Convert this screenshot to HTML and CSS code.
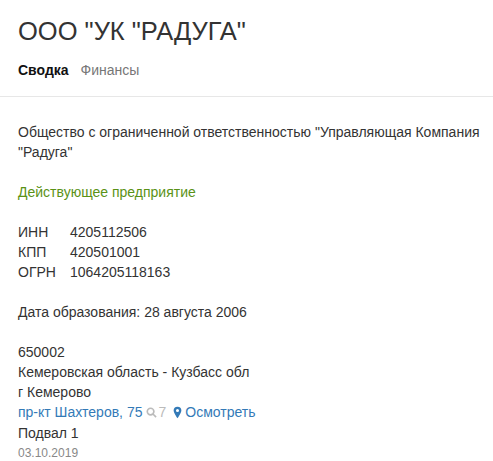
FILE: index.html
```html
<!DOCTYPE html>
<html lang="ru">
<head>
<meta charset="utf-8">
<title>ООО "УК "РАДУГА"</title>
<link rel="stylesheet" href="styles.css">
</head>
<body>
<header class="head">
  <h1 class="title">ООО "УК "РАДУГА"</h1>
  <nav class="tabs"><a class="tab active">Сводка</a><a class="tab">Финансы</a></nav>
</header>
<main class="content">
  <p class="block">Общество с ограниченной ответственностью "Управляющая Компания "Радуга"</p>
  <p class="block status">Действующее предприятие</p>
  <dl class="block codes">
    <dt>ИНН</dt><dd>4205112506</dd>
    <dt>КПП</dt><dd>420501001</dd>
    <dt>ОГРН</dt><dd>1064205118163</dd>
  </dl>
  <p class="block">Дата образования: 28 августа 2006</p>
  <address class="addr">
    <div>650002</div>
    <div>Кемеровская область - Кузбасс обл</div>
    <div>г Кемерово</div>
    <div class="street"><a class="link">пр-кт Шахтеров, 75</a>
      <span class="count"><svg class="i-search" viewBox="0 0 12 12"><circle cx="5" cy="5" r="3.6"/><path d="M7.6 7.6 11 11"/></svg>7</span>
      <a class="link look"><svg class="i-pin" viewBox="0 0 10 14"><path fill-rule="evenodd" d="M5 .5A4.3 4.3 0 0 0 .7 4.8C.7 7.500 5 13.500 5 13.500S9.300 7.500 9.300 4.800A4.300 4.300 0 0 0 5 .5ZM5 3.100A1.700 1.700 0 1 1 5 6.500 1.700 1.700 0 0 1 5 3.100Z"/></svg>Осмотреть</a></div>
    <div class="sub">Подвал 1</div>
    <div class="date">03.10.2019</div>
  </address>
</main>
</body>
</html>
```
FILE: styles.css
```css
* { box-sizing: border-box; }
html, body { margin: 0; padding: 0; }
body { font-family: "Liberation Sans", Arial, sans-serif; font-size: 14px; line-height: 20px; color: #333; background: #fff; overflow: hidden; }
.head { padding: 15px 18px 0; height: 97px; border-bottom: 1px solid #e7e7e7; }
.title { margin: 0; font-size: 25.5px; line-height: 32px; font-weight: 400; color: #333; }
.tabs { display: flex; gap: 12px; margin-top: 13px; }
.tab { color: #777; }
.tab.active { color: #111; font-weight: 700; }
.content { padding: 25px 0 0 18px; }
.block { margin: 0 0 20px; }
.status { color: #5a9216; }
.codes { display: grid; grid-template-columns: 52px auto; justify-content: start; }
.codes dt, .codes dd { margin: 0; }
.addr { font-style: normal; }
.link { color: #337ab7; }
.street { display: flex; align-items: center; gap: 4px; }
.count { display: inline-flex; align-items: center; gap: 1px; color: #bbb; font-size: 14px; }
.i-search { width: 11px; height: 11px; fill: none; stroke: #bbb; stroke-width: 1.800; }
.look { display: inline-flex; align-items: center; gap: 3px; margin-left: 3px; }
.i-pin { width: 9px; height: 13px; fill: #337ab7; }
.sub { margin-top: 1px; }
.date { color: #888; font-size: 12px; }
```
